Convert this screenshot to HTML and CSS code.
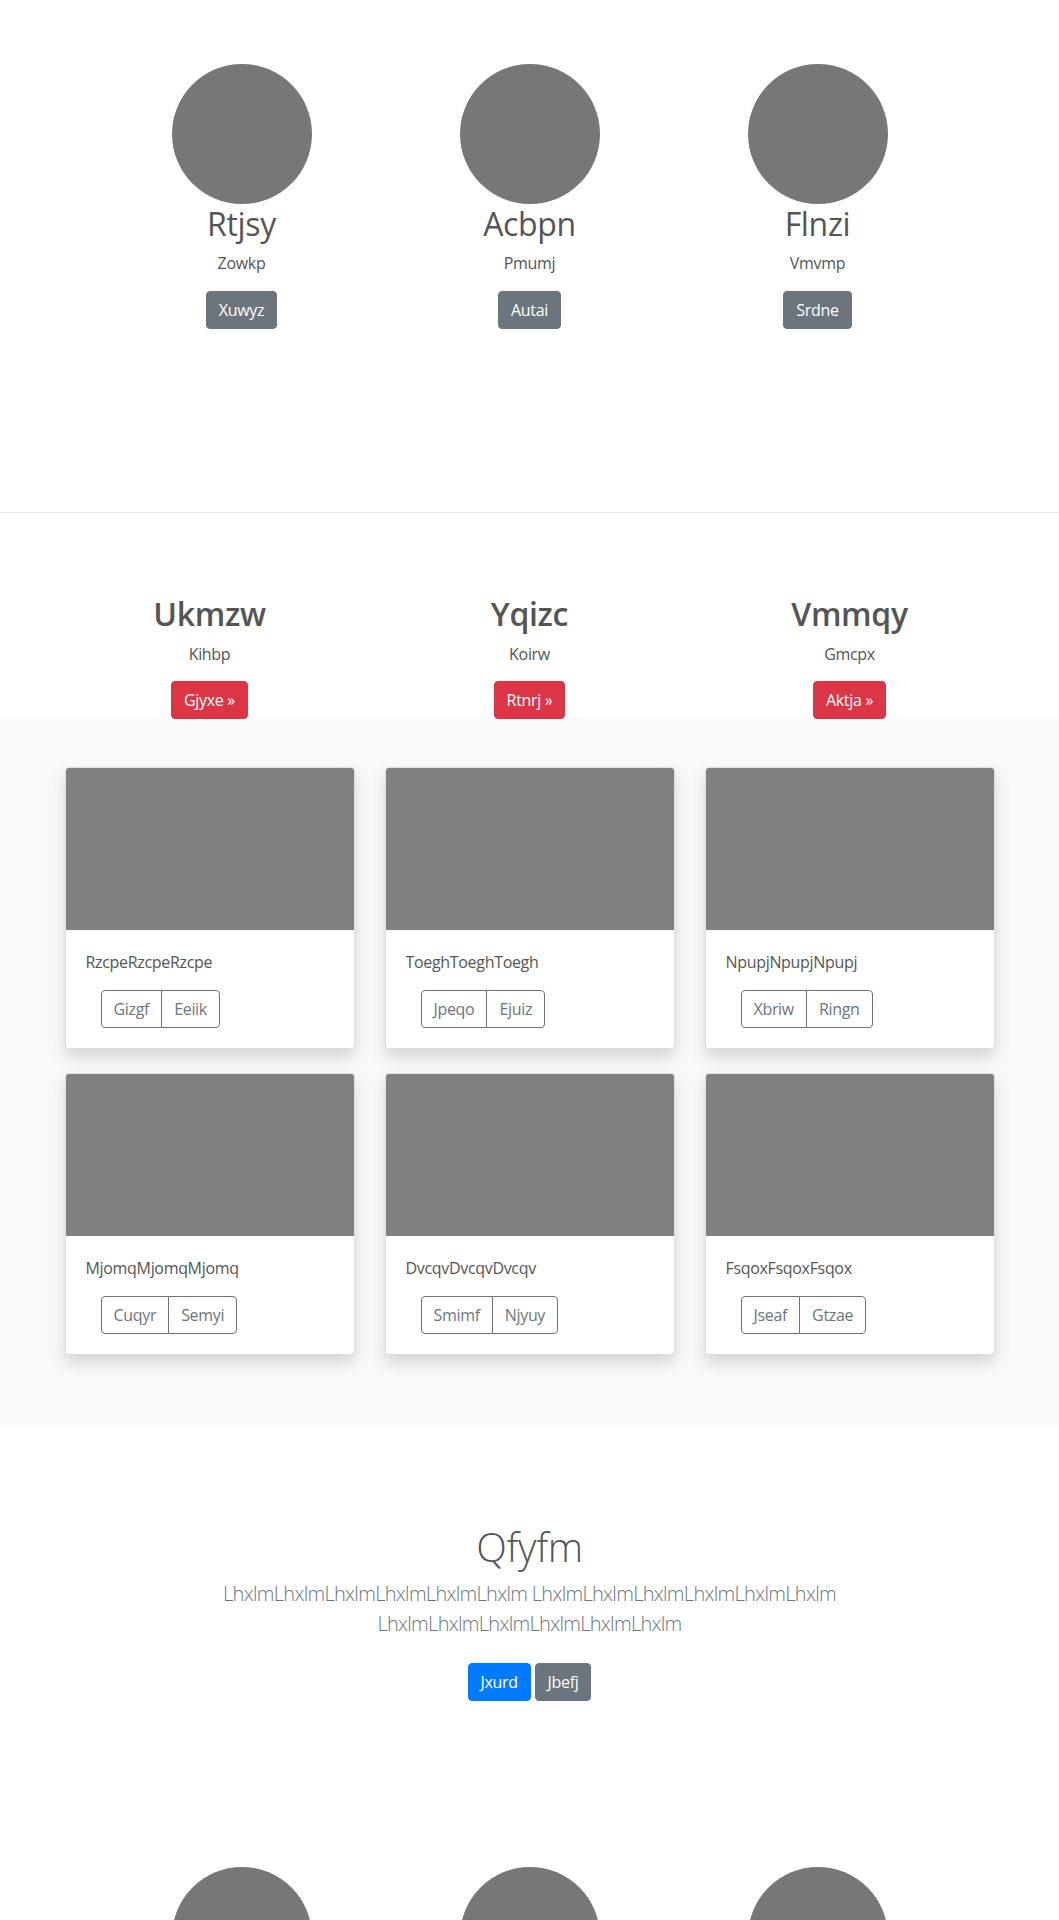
FILE: index.html
```html
<!DOCTYPE html>
<html lang="en">
<head>
    <meta charset="UTF-8">
    <meta name="viewport" content="width=device-width, initial-scale=1.0">
    <title>Album</title>
    <link rel="stylesheet" href="styles.css">
</head>
<body>
    <section class="features">
        <div class="features-row">
            <div class="feature">
                <div class="avatar"></div>
                <h2>Rtjsy</h2>
                <p>Zowkp</p>
                <p><a class="btn btn-secondary" href="#">Xuwyz</a></p>
            </div>
            <div class="feature">
                <div class="avatar"></div>
                <h2>Acbpn</h2>
                <p>Pmumj</p>
                <p><a class="btn btn-secondary" href="#">Autai</a></p>
            </div>
            <div class="feature">
                <div class="avatar"></div>
                <h2>Flnzi</h2>
                <p>Vmvmp</p>
                <p><a class="btn btn-secondary" href="#">Srdne</a></p>
            </div>
        </div>
    </section>

    <hr class="divider">

    <section class="highlights">
        <div class="container three-cols">
            <div class="highlight">
                <h2>Ukmzw</h2>
                <p>Kihbp</p>
                <p><a class="btn btn-danger" href="#">Gjyxe &raquo;</a></p>
            </div>
            <div class="highlight">
                <h2>Yqizc</h2>
                <p>Koirw</p>
                <p><a class="btn btn-danger" href="#">Rtnrj &raquo;</a></p>
            </div>
            <div class="highlight">
                <h2>Vmmqy</h2>
                <p>Gmcpx</p>
                <p><a class="btn btn-danger" href="#">Aktja &raquo;</a></p>
            </div>
        </div>
    </section>

    <section class="album">
        <div class="container card-grid">
            <div class="card">
                <div class="card-img"></div>
                <div class="card-body">
                    <p>RzcpeRzcpeRzcpe</p>
                    <div class="btn-group">
                        <button class="btn btn-outline">Gizgf</button><button class="btn btn-outline">Eeiik</button>
                    </div>
                </div>
            </div>
            <div class="card">
                <div class="card-img"></div>
                <div class="card-body">
                    <p>ToeghToeghToegh</p>
                    <div class="btn-group">
                        <button class="btn btn-outline">Jpeqo</button><button class="btn btn-outline">Ejuiz</button>
                    </div>
                </div>
            </div>
            <div class="card">
                <div class="card-img"></div>
                <div class="card-body">
                    <p>NpupjNpupjNpupj</p>
                    <div class="btn-group">
                        <button class="btn btn-outline">Xbriw</button><button class="btn btn-outline">Ringn</button>
                    </div>
                </div>
            </div>
            <div class="card">
                <div class="card-img"></div>
                <div class="card-body">
                    <p>MjomqMjomqMjomq</p>
                    <div class="btn-group">
                        <button class="btn btn-outline">Cuqyr</button><button class="btn btn-outline">Semyi</button>
                    </div>
                </div>
            </div>
            <div class="card">
                <div class="card-img"></div>
                <div class="card-body">
                    <p>DvcqvDvcqvDvcqv</p>
                    <div class="btn-group">
                        <button class="btn btn-outline">Smimf</button><button class="btn btn-outline">Njyuy</button>
                    </div>
                </div>
            </div>
            <div class="card">
                <div class="card-img"></div>
                <div class="card-body">
                    <p>FsqoxFsqoxFsqox</p>
                    <div class="btn-group">
                        <button class="btn btn-outline">Jseaf</button><button class="btn btn-outline">Gtzae</button>
                    </div>
                </div>
            </div>
        </div>
    </section>

    <section class="jumbotron">
        <div class="jumbotron-inner">
            <h1>Qfyfm</h1>
            <p class="lead">LhxlmLhxlmLhxlmLhxlmLhxlmLhxlm LhxlmLhxlmLhxlmLhxlmLhxlmLhxlm LhxlmLhxlmLhxlmLhxlmLhxlmLhxlm</p>
            <p class="actions">
                <a class="btn btn-primary" href="#">Jxurd</a>
                <a class="btn btn-secondary" href="#">Jbefj</a>
            </p>
        </div>
    </section>

    <section class="features">
        <div class="features-row">
            <div class="feature">
                <div class="avatar"></div>
                <h2>Ovnhi</h2>
                <p>Wqzke</p>
                <p><a class="btn btn-secondary" href="#">Paxlo</a></p>
            </div>
            <div class="feature">
                <div class="avatar"></div>
                <h2>Tudmy</h2>
                <p>Hcsib</p>
                <p><a class="btn btn-secondary" href="#">Ermqu</a></p>
            </div>
            <div class="feature">
                <div class="avatar"></div>
                <h2>Kgrwa</h2>
                <p>Ynfod</p>
                <p><a class="btn btn-secondary" href="#">Bzjvt</a></p>
            </div>
        </div>
    </section>
</body>
</html>
```

FILE: styles.css
```css
* {
    box-sizing: border-box;
}
body {
    margin: 0;
    background-color: #fff;
    color: #555;
    font-family: "Open Sans", "Noto Sans", Arial, sans-serif;
    font-size: 16px;
    line-height: 1.5;
    letter-spacing: -0.02em;
}
h1, h2, p {
    margin: 0;
}
.container {
    max-width: 960px;
    margin: 0 auto;
    padding: 0 15px;
}

/* buttons */
.btn {
    display: inline-block;
    padding: 6px 12px;
    font-family: inherit;
    font-size: 16px;
    line-height: 24px;
    letter-spacing: inherit;
    border: 1px solid transparent;
    border-radius: 4px;
    color: #fff;
    text-decoration: none;
    background: none;
    cursor: pointer;
}
.btn-secondary {
    background-color: #6c757d;
    border-color: #6c757d;
}
.btn-danger {
    background-color: #dc3545;
    border-color: #dc3545;
}
.btn-primary {
    background-color: #007bff;
    border-color: #007bff;
}
.btn-outline {
    color: #6c757d;
    border-color: #6c757d;
    background-color: transparent;
}

/* round features */
.features {
    padding: 64px 0 183px;
}
.features-row {
    display: grid;
    grid-template-columns: repeat(3, 288px);
    justify-content: center;
}
.feature {
    text-align: center;
}
.avatar {
    width: 140px;
    height: 140px;
    margin: 0 auto;
    border-radius: 50%;
    background-color: #777;
}
.feature h2 {
    font-size: 32px;
    font-weight: 400;
    line-height: 1.2;
    margin: 1px 0 8px;
}
.feature p {
    margin-bottom: 16px;
}
.feature p:last-child {
    margin-bottom: 0;
}

.divider {
    margin: 0;
    border: 0;
    border-top: 1px solid rgba(0, 0, 0, 0.1);
}

/* highlights */
.highlights {
    padding-top: 82px;
}
.three-cols {
    display: grid;
    grid-template-columns: repeat(3, 1fr);
    gap: 30px;
}
.highlight {
    text-align: center;
}
.highlight h2 {
    font-size: 32px;
    font-weight: 600;
    line-height: 1.2;
    margin-bottom: 8px;
}
.highlight p {
    margin-bottom: 15px;
}
.highlight p:last-child {
    margin-bottom: 0;
}

/* album */
.album {
    background-color: #f8f9fa;
    padding: 48px 0;
}
.card-grid {
    display: grid;
    grid-template-columns: repeat(3, 1fr);
    column-gap: 30px;
}
.card {
    background-color: #fff;
    border: 1px solid rgba(0, 0, 0, 0.125);
    border-radius: 4px;
    overflow: hidden;
    margin-bottom: 24px;
    box-shadow: 0 8px 16px rgba(0, 0, 0, 0.15);
}
.card-img {
    height: 162px;
    background-color: #808080;
}
.card-body {
    padding: 20px;
}
.card-body p {
    margin-bottom: 16px;
}
.btn-group {
    display: inline-flex;
    margin-left: 15px;
}
.btn-group .btn:first-child {
    border-top-right-radius: 0;
    border-bottom-right-radius: 0;
}
.btn-group .btn:last-child {
    margin-left: -1px;
    border-top-left-radius: 0;
    border-bottom-left-radius: 0;
}

/* jumbotron */
.jumbotron {
    padding: 96px 0 94px;
    text-align: center;
}
.jumbotron-inner {
    max-width: 720px;
    margin: 0 auto;
    padding: 0 15px;
}
.jumbotron h1 {
    font-size: 40px;
    font-weight: 300;
    line-height: 1.2;
    margin-bottom: 8px;
}
.lead {
    font-size: 20px;
    font-weight: 300;
    letter-spacing: -0.035em;
    color: #6c757d;
    margin-bottom: 16px;
}
.actions .btn {
    margin: 8px 0;
}
```
